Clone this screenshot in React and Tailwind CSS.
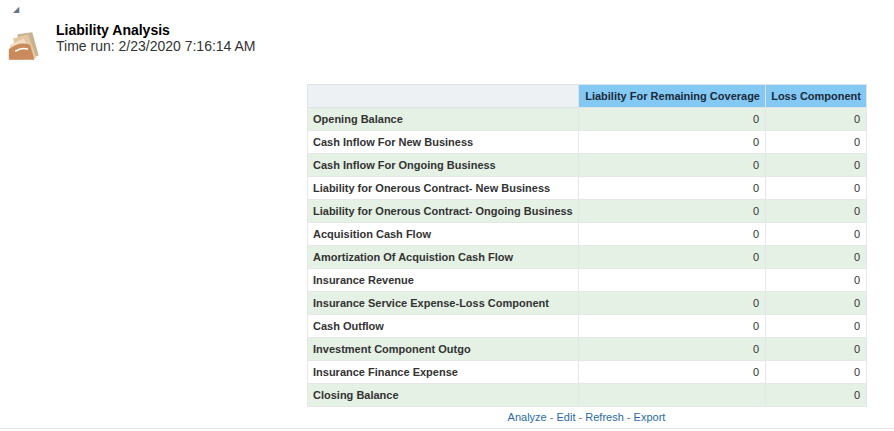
const rows = [
  ["Opening Balance", "0", "0"],
  ["Cash Inflow For New Business", "0", "0"],
  ["Cash Inflow For Ongoing Business", "0", "0"],
  ["Liability for Onerous Contract- New Business", "0", "0"],
  ["Liability for Onerous Contract- Ongoing Business", "0", "0"],
  ["Acquisition Cash Flow", "0", "0"],
  ["Amortization Of Acquistion Cash Flow", "0", "0"],
  ["Insurance Revenue", "", "0"],
  ["Insurance Service Expense-Loss Component", "0", "0"],
  ["Cash Outflow", "0", "0"],
  ["Investment Component Outgo", "0", "0"],
  ["Insurance Finance Expense", "0", "0"],
  ["Closing Balance", "", "0"],
];

function BookIcon() {
  return (
    <svg width="44" height="32" viewBox="0 0 40 30">
      <path d="M10 4 L24 2 L30 24 L14 28 Z" fill="#c9b28f" />
      <path d="M6 8 L20 4 L28 26 L10 28 Z" fill="#e3c7a3" />
      <path d="M3 14 L16 8 L26 27 L4 28 Z" fill="#f3dcc2" />
      <path d="M2 18 Q12 10 22 14 L26 28 L2 28 Z" fill="#c98a5c" />
      <path d="M8 20 Q14 16 20 18" stroke="#fff" strokeWidth="1.5" fill="none" />
    </svg>
  );
}

export default function App() {
  return (
    <div
      className="w-[894px] h-[431px] bg-white relative overflow-hidden"
      style={{ fontFamily: "Arial, 'Liberation Sans', sans-serif" }}
    >
      <div className="pl-[13px] pt-[6px] text-[8px] text-gray-500 leading-none">◢</div>
      <div className="flex items-start pl-[6px] pt-[8px]">
        <div className="mt-[8px]">
          <BookIcon />
        </div>
        <div className="ml-[6px]">
          <div className="text-[14px] font-bold text-black leading-[16px]">Liability Analysis</div>
          <div className="text-[14px] text-[#333] leading-[16px]">Time run: 2/23/2020 7:16:14 AM</div>
        </div>
      </div>
      <div className="ml-[307px] mt-[22px] w-[559px]">
        <table className="w-[559px] border-collapse text-[11px] font-bold text-[#333] table-fixed">
          <colgroup>
            <col className="w-[271px]" />
            <col className="w-[187px]" />
            <col className="w-[101px]" />
          </colgroup>
          <thead>
            <tr className="h-[23px]">
              <th className="bg-[#eef1f4] border border-[#dde3e8]"></th>
              <th className="bg-[#84c8f4] border border-[#dde3e8] text-right pr-[5px] text-[#1a2a3a]">Liability For Remaining Coverage</th>
              <th className="bg-[#84c8f4] border border-[#dde3e8] text-right pr-[5px] text-[#1a2a3a]">Loss Component</th>
            </tr>
          </thead>
          <tbody>
            {rows.map((r, i) => (
              <tr key={r[0]} className={`h-[23px] ${i % 2 === 0 ? "bg-[#e5f1e5]" : "bg-white"}`}>
                <td className="border border-[#e4e8ea] pl-[5px] text-[#333]">{r[0]}</td>
                <td className="border border-[#e4e8ea] text-right pr-[6px] font-normal text-[#333]">{r[1]}</td>
                <td className="border border-[#e4e8ea] text-right pr-[6px] font-normal text-[#333]">{r[2]}</td>
              </tr>
            ))}
          </tbody>
        </table>
        <div className="text-center text-[11px] text-[#2a6aa8] mt-[2px]">
          Analyze <span className="text-gray-500">-</span> Edit <span className="text-gray-500">-</span> Refresh <span className="text-gray-500">-</span> Export
        </div>
      </div>
      <div className="absolute left-0 right-0 top-[428px] h-[1px] bg-[#dde3e8]" />
    </div>
  );
}
